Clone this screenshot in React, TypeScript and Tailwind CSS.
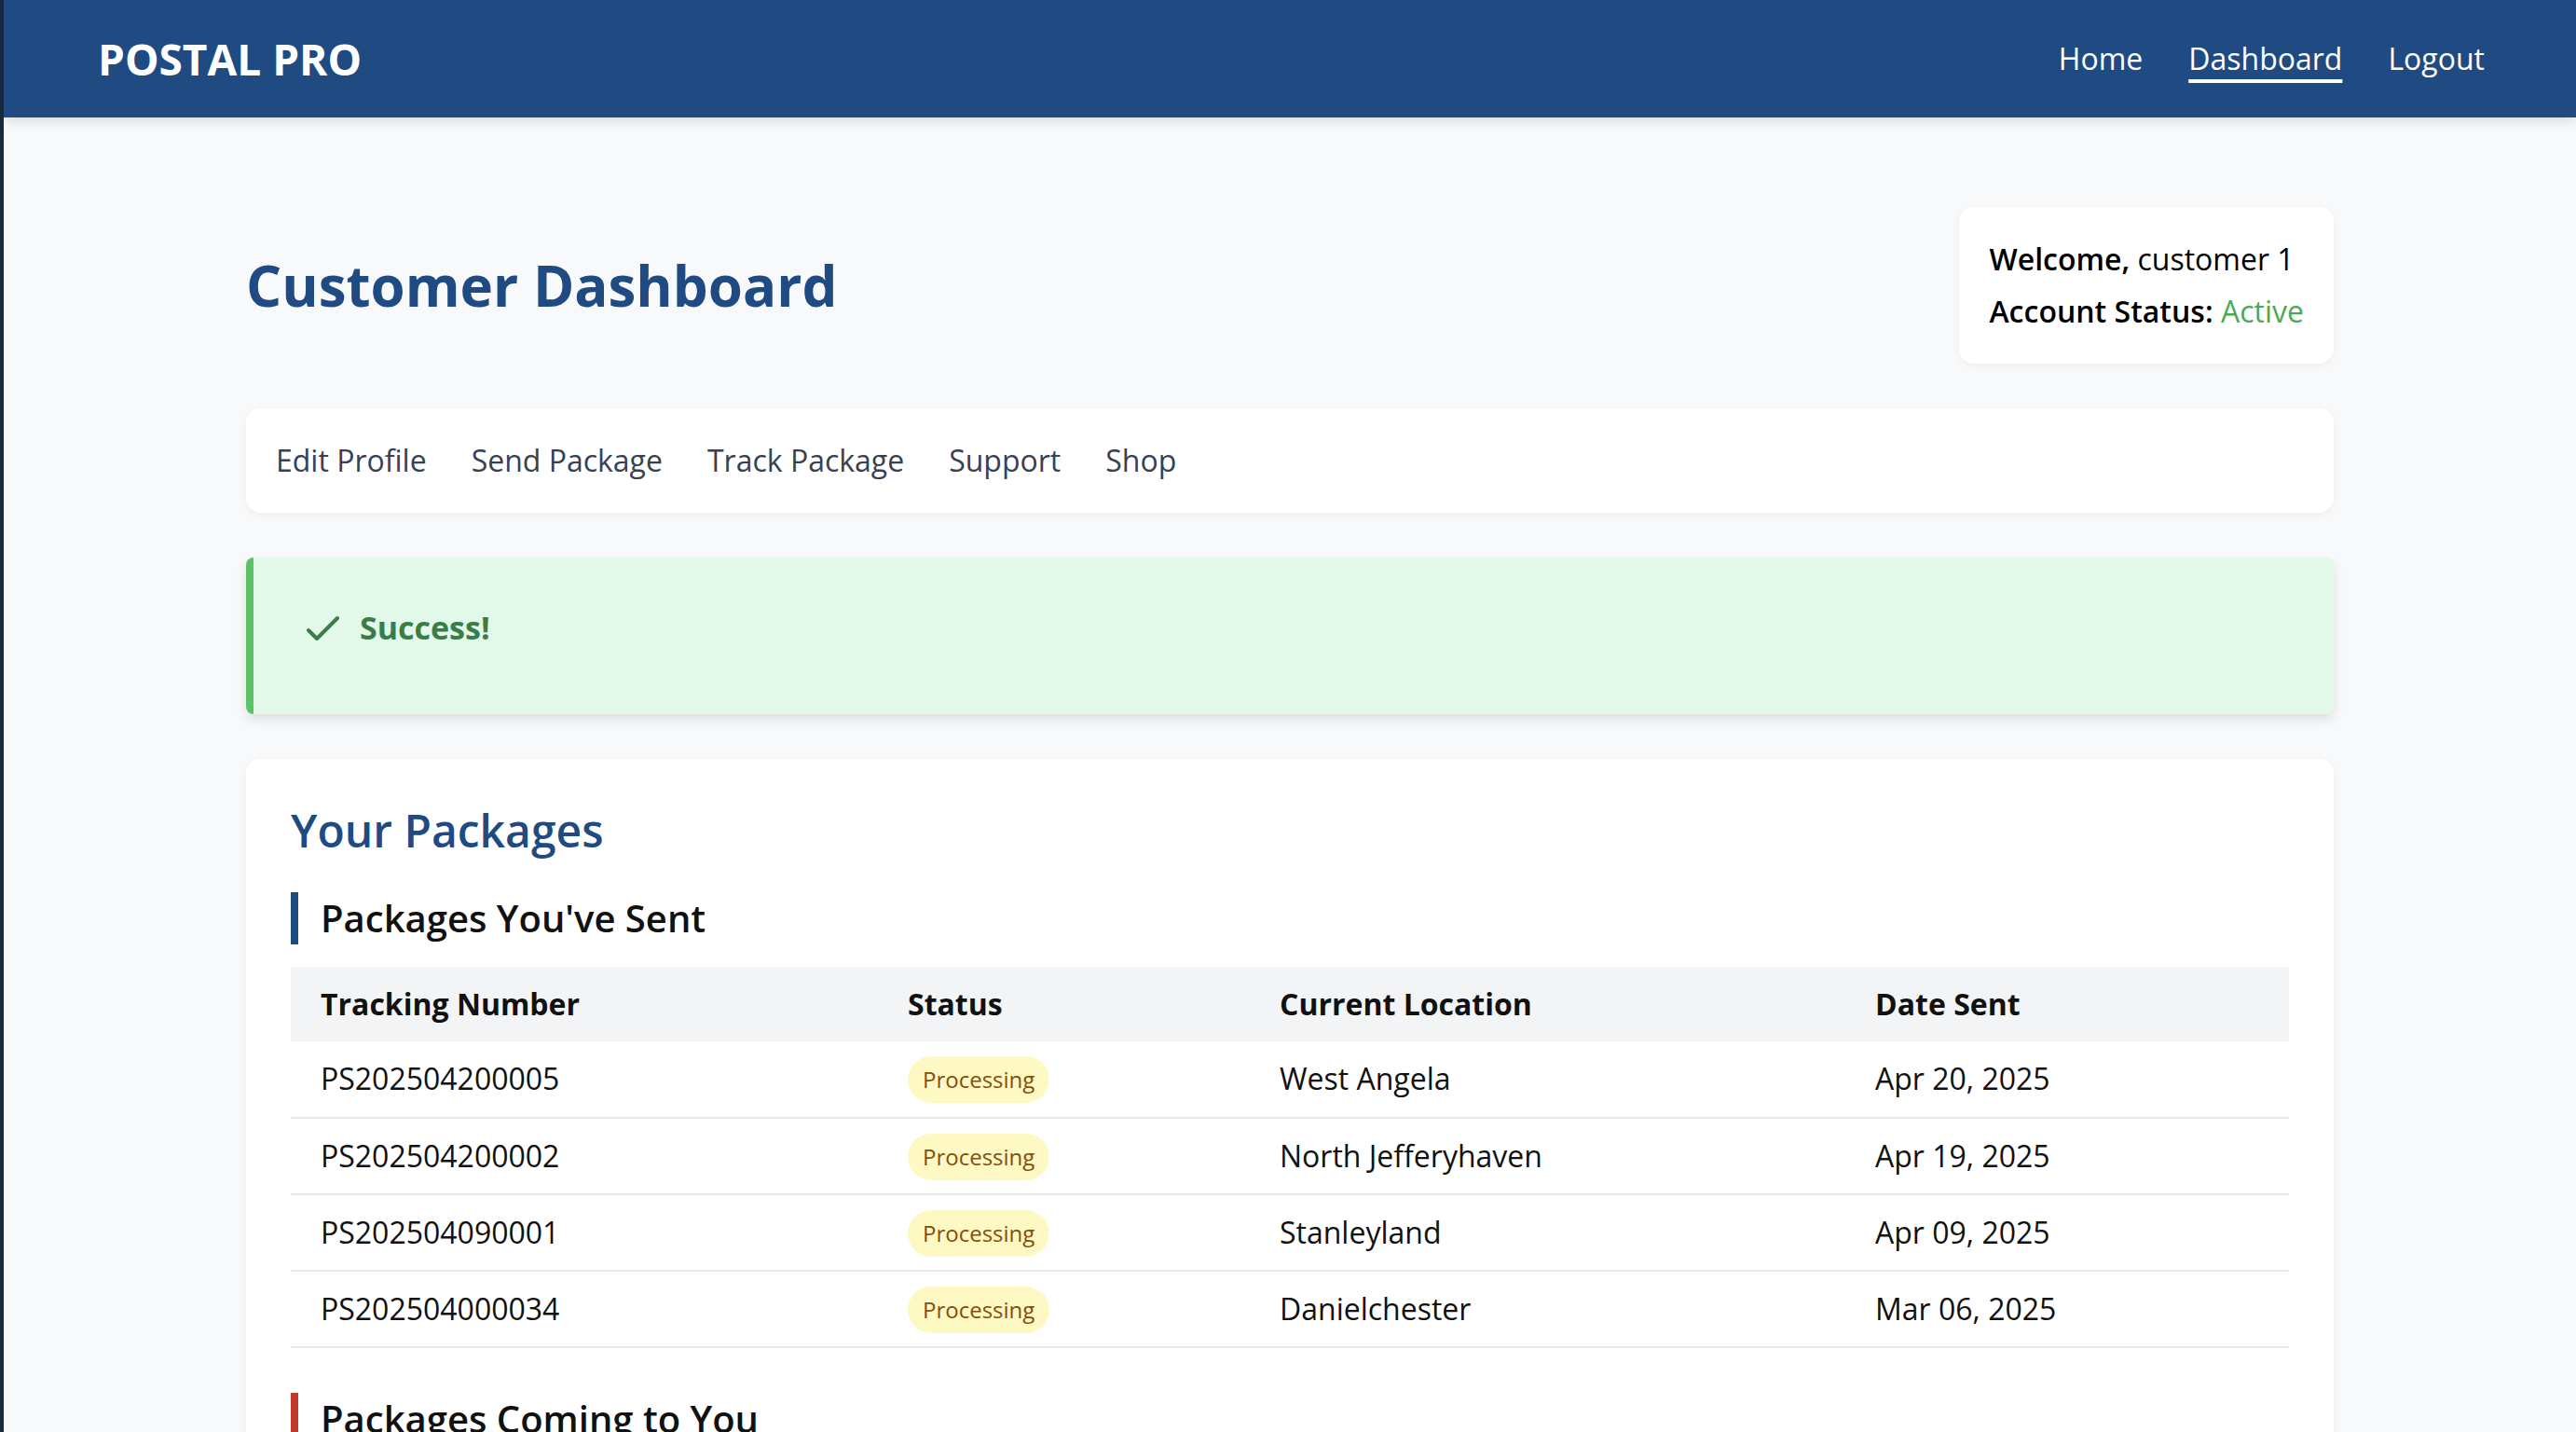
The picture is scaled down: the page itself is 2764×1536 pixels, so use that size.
const sentPackages = [
  { tracking: "PS202504200005", status: "Processing", location: "West Angela", date: "Apr 20, 2025" },
  { tracking: "PS202504200002", status: "Processing", location: "North Jefferyhaven", date: "Apr 19, 2025" },
  { tracking: "PS202504090001", status: "Processing", location: "Stanleyland", date: "Apr 09, 2025" },
  { tracking: "PS202504000034", status: "Processing", location: "Danielchester", date: "Mar 06, 2025" },
];

const tabs = ["Edit Profile", "Send Package", "Track Package", "Support", "Shop"];

const Navbar = () => {
  return (
    <nav className="h-[126px] bg-[#1f4a82] shadow-[0_4px_12px_rgba(0,0,0,0.12)] flex items-center justify-between pl-[101px] pr-[98px] relative z-10">
      <span className="text-white text-[46px] font-bold leading-none">POSTAL PRO</span>
      <div className="flex items-center gap-[49px] text-white text-[32px] leading-[48px]">
        <a>Home</a>
        <a className="underline decoration-[4px] underline-offset-[10px]">Dashboard</a>
        <a>Logout</a>
      </div>
    </nav>
  );
};

const WelcomeCard = () => {
  return (
    <div className="bg-white rounded-2xl shadow-[0_2px_8px_rgba(0,0,0,0.05)] p-8 flex flex-col gap-2 text-[32px] leading-[48px] text-black">
      <p>
        <span className="font-semibold">Welcome,</span> customer 1
      </p>
      <p>
        <span className="font-semibold">Account Status:</span> <span className="text-[#4caa55]">Active</span>
      </p>
    </div>
  );
};

const SuccessAlert = () => {
  return (
    <div className="mt-12 bg-[#e2f8e9] border-l-[8px] border-[#5cc26a] rounded-lg shadow-[0_6px_12px_rgba(0,0,0,0.1)] pl-[57px] pt-[50px] pb-[67px] flex items-center gap-[21px]">
      <svg width="36" height="28" viewBox="0 0 36 28" fill="none" className="shrink-0">
        <polyline points="2,16 11,25 33,3" stroke="#3b7d46" strokeWidth="4" strokeLinecap="round" strokeLinejoin="round" />
      </svg>
      <span className="text-[34px] leading-[51px] font-bold text-[#3b7d46]">Success!</span>
    </div>
  );
};

const SectionHeading = ({ text, color }: { text: string; color: string }) => {
  return (
    <h3 className={`border-l-[8px] ${color} pl-6 text-[40px] leading-[56px] font-semibold text-[#111]`}>{text}</h3>
  );
};

const PackagesTable = () => {
  return (
    <table className="w-full table-fixed border-collapse text-[32px] leading-[48px] text-[#111]">
      <thead>
        <tr className="bg-[#f3f4f6]">
          <th className="w-[630px] px-8 py-4 text-left font-bold">Tracking Number</th>
          <th className="w-[399px] px-8 py-4 text-left font-bold">Status</th>
          <th className="w-[639px] px-8 py-4 text-left font-bold">Current Location</th>
          <th className="px-8 py-4 text-left font-bold">Date Sent</th>
        </tr>
      </thead>
      <tbody>
        {sentPackages.map((p) => (
          <tr key={p.tracking} className="border-b-2 border-[#e5e7eb]">
            <td className="h-[82px] px-8 py-0 align-middle">{p.tracking}</td>
            <td className="h-[82px] px-8 py-0 align-middle">
              <span className="inline-flex items-center h-[50px] rounded-full bg-[#fef9c3] text-[#854d0e] text-[24px] leading-none px-4">
                {p.status}
              </span>
            </td>
            <td className="h-[82px] px-8 py-0 align-middle">{p.location}</td>
            <td className="h-[82px] px-8 py-0 align-middle">{p.date}</td>
          </tr>
        ))}
      </tbody>
    </table>
  );
};

export default function App() {
  return (
    <div className="min-h-screen bg-[#f8f9fb] border-l-[4px] border-[#1b2a3f] font-['Open_Sans',sans-serif]">
      <Navbar />
      <main className="w-[2240px] mx-auto pt-[96px] pb-24">
        <div className="flex items-center justify-between">
          <h1 className="text-[60px] font-bold text-[#1f4a82] leading-tight">Customer Dashboard</h1>
          <WelcomeCard />
        </div>

        <div className="mt-12 bg-white rounded-2xl shadow-[0_2px_8px_rgba(0,0,0,0.05)] px-8 py-8 flex gap-12 text-[32px] leading-[48px] text-[#374151]">
          {tabs.map((t) => (
            <a key={t}>{t}</a>
          ))}
        </div>

        <SuccessAlert />

        <section className="mt-12 bg-white rounded-2xl shadow-[0_2px_8px_rgba(0,0,0,0.05)] p-12">
          <h2 className="text-[48px] leading-[1.2] font-semibold text-[#1f4a82]">Your Packages</h2>
          <div className="mt-[37px]">
            <SectionHeading text="Packages You've Sent" color="border-[#1f4a82]" />
          </div>
          <div className="mt-6">
            <PackagesTable />
          </div>
          <div className="mt-12">
            <SectionHeading text="Packages Coming to You" color="border-[#c0392b]" />
          </div>
          <p className="mt-6 text-[32px] leading-[48px] text-[#6b7280]">No incoming packages.</p>
        </section>
      </main>
    </div>
  );
}
